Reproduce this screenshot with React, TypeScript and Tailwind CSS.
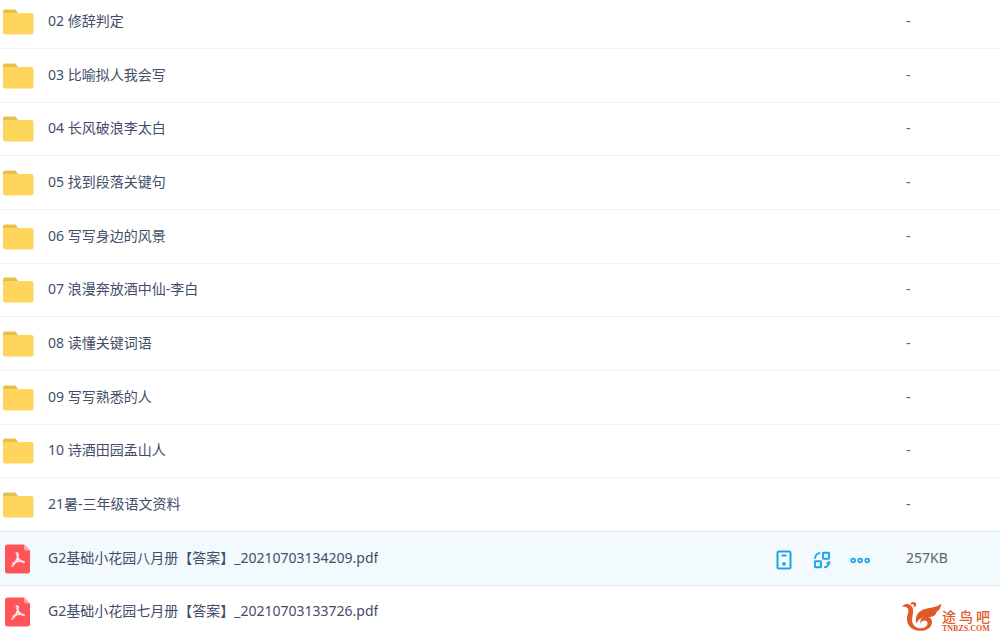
import React from 'react';
import clsx from 'clsx';

type FileItem = {
  name: string;
  kind: 'folder' | 'pdf';
  size: string;
  active?: boolean;
};

const files: FileItem[] = [
  { name: '02 修辞判定', kind: 'folder', size: '-' },
  { name: '03 比喻拟人我会写', kind: 'folder', size: '-' },
  { name: '04 长风破浪李太白', kind: 'folder', size: '-' },
  { name: '05 找到段落关键句', kind: 'folder', size: '-' },
  { name: '06 写写身边的风景', kind: 'folder', size: '-' },
  { name: '07 浪漫奔放酒中仙-李白', kind: 'folder', size: '-' },
  { name: '08 读懂关键词语', kind: 'folder', size: '-' },
  { name: '09 写写熟悉的人', kind: 'folder', size: '-' },
  { name: '10 诗酒田园孟山人', kind: 'folder', size: '-' },
  { name: '21暑-三年级语文资料', kind: 'folder', size: '-' },
  { name: 'G2基础小花园八月册【答案】_20210703134209.pdf', kind: 'pdf', size: '257KB', active: true },
  { name: 'G2基础小花园七月册【答案】_20210703133726.pdf', kind: 'pdf', size: '' },
];

const FolderIcon = () => (
  <svg width="32" height="26" viewBox="0 0 32 26" className="shrink-0" aria-hidden="true">
    <path d="M1 8V2.5A2 2 0 0 1 3 .5h9.5a2 2 0 0 1 1.6.8L16 4v4z" fill="#e6bf4d" />
    <path d="M1 6a2 2 0 0 1 2-2h26.500a2 2 0 0 1 2 2v17.500a2 2 0 0 1-2 2H3a2 2 0 0 1-2-2z" fill="#ffd55c" />
  </svg>
);

const PdfIcon = () => (
  <svg width="32" height="30" viewBox="0 0 32 30" className="shrink-0" aria-hidden="true">
    <path d="M5 .5h17l6 6V27a2.500 2.500 0 0 1-2.500 2.500H5.500A2.500 2.500 0 0 1 3 27V3A2.500 2.500 0 0 1 5 .5z" fill="#ff5459" />
    <path d="M22 .5l6 6h-4a2 2 0 0 1-2-2z" fill="#ffa3a6" />
    <path
      d="M14.300 9.200c1.800-.8 2.300 1 1.500 3.600-1 3.300-2.800 7-5.800 9.300M15 11c.6 3.200 3 6.300 7 7.400M11 19.200c3-1.700 7-2.500 10.700-1.600"
      fill="none"
      stroke="#ffe3e4"
      strokeWidth="1.700"
      strokeLinecap="round"
    />
  </svg>
);

const DeviceIcon = () => (
  <svg width="20" height="20" viewBox="0 0 20 20" fill="none" stroke="#1ba5ee" strokeWidth="2" aria-hidden="true">
    <rect x="3.500" y="1.500" width="13" height="17" rx="1.500" />
    <path d="M7.500 5.500h5" />
    <rect x="8.300" y="12.200" width="3.400" height="3.400" rx=".8" fill="#1ba5ee" stroke="none" />
  </svg>
);

const TransferIcon = () => (
  <svg width="20" height="20" viewBox="0 0 20 20" fill="none" stroke="#1ba5ee" strokeWidth="1.900" aria-hidden="true">
    <rect x="11" y="2.700" width="6" height="6" rx=".4" />
    <rect x="3" y="11.300" width="6" height="6" rx=".4" />
    <path d="M3 8.800C3.200 5.500 4.700 3.500 8.200 2.900" />
    <path d="M12 17.400c2.900-.3 4.400-1.700 4.700-4.600" />
    <path d="M13.800 13.600l3.400-3.200 1.500 4.200z" fill="#1ba5ee" stroke="none" />
  </svg>
);

const MoreIcon = () => (
  <svg width="20" height="20" viewBox="0 0 20 20" fill="none" stroke="#1ba5ee" strokeWidth="1.800" aria-hidden="true">
    <circle cx="3.200" cy="10.500" r="1.900" />
    <circle cx="10.200" cy="10.500" r="1.900" />
    <circle cx="17.200" cy="10.500" r="1.900" />
  </svg>
);

const RowActions = () => (
  <div className="flex items-center gap-[18px] pt-0.5">
    <button type="button" aria-label="Device" className="cursor-pointer">
      <DeviceIcon />
    </button>
    <button type="button" aria-label="Transfer" className="cursor-pointer">
      <TransferIcon />
    </button>
    <button type="button" aria-label="More" className="cursor-pointer">
      <MoreIcon />
    </button>
  </div>
);

const SiteMark = () => (
  <div className="absolute right-2.5 bottom-1 flex items-end text-[#e0592b]">
    <svg width="42" height="32" viewBox="0 0 42 32" fill="currentColor" aria-hidden="true">
      {/* head, neck and the bowl of the body */}
      <path d="M2 5.500C4 3.200 6.500 2.500 9 3.500c4 1.600 4.600 5 4 8.500-.8 5-2 9.500 1.500 13 2 2 4.500 2.500 7 2.300 3.800-.3 6.200-2.500 6-5.300-.2-2-2-2.800-4.200-2.300-2 .5-2.800 1.800-2.500 3.300-1.500-3.500.7-6.700 4.700-7.200 4.300-.4 6.800 2 6.500 5.700-.5 5.500-6 8.800-12.500 8.300C11 29.300 6.500 24 7 16.500c.3-3.200 2-5.500 1.200-8.200C7.400 6 5 5.300 2 5.500z" />
      {/* wing */}
      <path d="M16.300 22.500C14.500 14.500 18.500 9.500 26 7.700c6-1.500 11-1 15.500-5.200-.7 4.500-2.500 7-5 8.500-.3 3-3.500 5-8 5-6 0-10 1.500-12.200 6.500z" />
      {/* crest */}
      <path d="M10.500 4C10.500 2 12 .8 13.800 1c2 .3 2.900 2 2.200 3.700-.6 1.300-2.200 1.500-3 .6.7-.1 1.100-.6 1-1.300-.2-.8-1.700-1-3.500 0z" />
    </svg>
    <div className="flex flex-col">
      <div className="flex gap-[3px] text-sm leading-4 font-medium">
        <span>途</span>
        <span>鸟</span>
        <span>吧</span>
      </div>
      <span className="font-['Liberation_Serif',serif] text-[8px] leading-[8px] font-bold">TNBZS.COM</span>
    </div>
  </div>
);

export default function App() {
  return (
    <main className="relative h-screen overflow-hidden bg-white font-['Noto_Sans','Noto_Sans_CJK_SC',sans-serif] text-sm text-[#424e67]">
      <table className="-mt-[5px] w-full table-fixed border-separate border-spacing-0">
        <colgroup>
          <col />
          <col className="w-[132px]" />
          <col className="w-[94px]" />
        </colgroup>
        <tbody>
          {files.map((file, index) => (
            <tr
              key={file.name}
              className={clsx(
                'h-[54px] nth-[3n]:h-[53px] [&>td]:border-b',
                file.active ? 'bg-[#f3fafe] [&>td]:border-[#d9ebf5]' : '[&>td]:border-[#f1f3f6]',
                files[index + 1]?.active && '[&>td]:border-[#d9ebf5]!'
              )}
            >
              <td className="p-0">
                <div className="flex items-center gap-3.5 pl-0.5">
                  {file.kind === 'folder' ? <FolderIcon /> : <PdfIcon />}
                  <span className="truncate pb-0.5 leading-5">{file.name}</span>
                </div>
              </td>
              <td className="p-0">{file.active && <RowActions />}</td>
              <td className="p-0 pb-0.5 leading-5 text-[#5f6368]">{file.size}</td>
            </tr>
          ))}
        </tbody>
      </table>
      <SiteMark />
    </main>
  );
}
